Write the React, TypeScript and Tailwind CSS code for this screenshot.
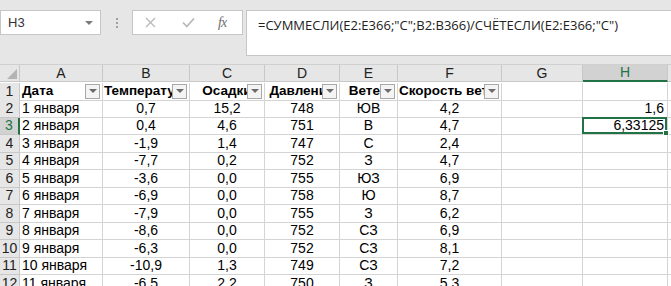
import React from 'react';

const cols = ['A', 'B', 'C', 'D', 'E', 'F', 'G', 'H'];

const header: { text: string; align: string }[] = [
  { text: 'Дата', align: 'justify-start pl-[2px]' },
  { text: 'Температура', align: 'justify-start pl-[1px]' },
  { text: 'Осадки', align: 'justify-center' },
  { text: 'Давление', align: 'justify-center' },
  { text: 'Ветер', align: 'justify-center' },
  { text: 'Скорость ветра', align: 'justify-start pl-[1px]' },
];

const rows: string[][] = [
  ['1 января', '0,7', '15,2', '748', 'ЮВ', '4,2', '', '1,6'],
  ['2 января', '0,4', '4,6', '751', 'В', '4,7', '', '6,33125'],
  ['3 января', '-1,9', '1,4', '747', 'С', '2,4', '', ''],
  ['4 января', '-7,7', '0,2', '752', 'З', '4,7', '', ''],
  ['5 января', '-3,6', '0,0', '755', 'ЮЗ', '6,9', '', ''],
  ['6 января', '-6,9', '0,0', '758', 'Ю', '8,7', '', ''],
  ['7 января', '-7,9', '0,0', '755', 'З', '6,2', '', ''],
  ['8 января', '-8,6', '0,0', '752', 'СЗ', '6,9', '', ''],
  ['9 января', '-6,3', '0,0', '752', 'СЗ', '8,1', '', ''],
  ['10 января', '-10,9', '1,3', '749', 'СЗ', '7,2', '', ''],
  ['11 января', '-6,5', '2,2', '750', 'З', '5,3', '', ''],
];

const gridCols = 'grid-cols-[20px_83px_87px_75px_75px_58px_104px_81px_85px_1fr]';

// Filter dropdown button sitting over the header cell's right edge
const FilterButton = () => (
  <div className="absolute right-0 inset-y-0 w-[17px] bg-white flex items-center">
    <div className="w-[15px] h-[15px] border border-[#a8a8a8] bg-[#f4f4f4] flex items-center justify-center">
      <div className="w-0 h-0 border-l-[4px] border-r-[4px] border-t-[4px] border-l-transparent border-r-transparent border-t-[#6b6b6b]" />
    </div>
  </div>
);

const App: React.FC = () => {
  return (
    <div className="w-[671px] h-[286px] overflow-hidden bg-white font-['Liberation_Sans',Arial,sans-serif] text-black select-none">
      {/* Formula bar area */}
      <div className="h-[64px] bg-[#e6e6e6] flex items-start pt-[10px]">
        <div className="w-[101px] h-[25px] bg-white border border-[#c6c6c6] flex items-center pl-[7px] pr-[7px] text-[13px] text-[#333]">
          <span className="flex-1">H3</span>
          <div className="w-0 h-0 border-l-[4px] border-r-[4px] border-t-[4px] border-l-transparent border-r-transparent border-t-[#7a7a7a]" />
        </div>
        <div className="w-[31px] h-[25px] flex flex-col items-center justify-center gap-[2px]">
          <div className="w-[2px] h-[2px] bg-[#a0a0a0]" />
          <div className="w-[2px] h-[2px] bg-[#a0a0a0]" />
          <div className="w-[2px] h-[2px] bg-[#a0a0a0]" />
        </div>
        <div className="w-[111px] h-[25px] bg-white border border-[#c6c6c6] flex items-center">
          <svg className="ml-[12px]" width="11" height="11" viewBox="0 0 11 11">
            <path d="M1 1 L10 10 M10 1 L1 10" stroke="#b8b8b8" strokeWidth="1.3" fill="none" />
          </svg>
          <svg className="ml-[26px]" width="13" height="11" viewBox="0 0 13 11">
            <path d="M1 5.5 L4.8 9.5 L12 1.5" stroke="#b8b8b8" strokeWidth="1.8" fill="none" />
          </svg>
          <span className="ml-[23px] font-['Liberation_Serif',serif] italic text-[14px] text-[#6e6e6e] tracking-[-1px]">fx</span>
        </div>
        <div className="ml-[3px] flex-1 h-[46px] bg-white border border-[#c6c6c6] border-r-0 pl-[11px] pt-[5px] text-[13px] text-[#222] font-['Open_Sans','Liberation_Sans',sans-serif]">
          =СУММЕСЛИ(E2:E366;"С";B2:B366)/СЧЁТЕСЛИ(E2:E366;"С")
        </div>
      </div>

      {/* Sheet */}
      <div className={`grid ${gridCols} auto-rows-[17.5px] border-t border-[#d0d0d0]`}>
        {/* column header row */}
        <div className="h-[17px] bg-[#e6e6e6] border-r border-b border-[#c8c8c8] relative">
          <svg className="absolute right-[2px] bottom-[2px]" width="10" height="10" viewBox="0 0 10 10">
            <path d="M10 0 L10 10 L0 10 Z" fill="#b4b4b4" />
          </svg>
        </div>
        {cols.map((c) => (
          <div
            key={c}
            className={`h-[17px] flex items-center justify-center text-[14px] border-r ${
              c === 'H'
                ? 'bg-[#d2d2d2] text-[#217346] border-b-2 border-b-[#217346] border-r-[#c8c8c8]'
                : 'bg-[#e6e6e6] text-[#222] border-b border-[#c8c8c8]'
            }`}
          >
            {c}
          </div>
        ))}
        <div className="h-[17px] bg-[#e6e6e6] border-b border-[#c8c8c8]" />

        {/* row 1: headers with filter buttons */}
        <div className="h-[18px] bg-[#e6e6e6] border-r border-b border-[#c8c8c8] flex items-center justify-center text-[14px] text-[#222]">1</div>
        {header.map((h) => (
          <div key={h.text} className={`h-[18px] relative border-r border-b border-[#d4d4d4] flex items-center overflow-hidden whitespace-nowrap font-bold text-[13.5px] ${h.align}`}>
            {h.text}
            <FilterButton />
          </div>
        ))}
        <div className="h-[18px] border-r border-b border-[#d4d4d4]" />
        <div className="h-[18px] border-r border-b border-[#d4d4d4]" />
        <div className="h-[18px] border-b border-[#d4d4d4]" />

        {rows.map((r, ri) => {
          const rowNum = ri + 2;
          const active = rowNum === 3;
          return (
            <React.Fragment key={rowNum}>
              <div
                className={`border-b flex items-center justify-center text-[14px] ${
                  active
                    ? 'bg-[#d2d2d2] text-[#217346] border-r-2 border-r-[#217346] border-b-[#c8c8c8]'
                    : 'bg-[#e6e6e6] text-[#222] border-r border-[#c8c8c8]'
                }`}
              >
                {rowNum}
              </div>
              {r.map((v, ci) => (
                <div
                  key={ci}
                  className={`border-r border-b border-[#d4d4d4] flex items-center text-[14px] whitespace-nowrap ${
                    ci === 0 ? 'pl-[2px]' : ci === 7 ? 'justify-end pr-[3px] relative' : 'justify-center'
                  }`}
                >
                  {v}
                  {ci === 7 && active && (
                    <div className="absolute -left-[1px] -top-[1px] right-0 bottom-0 border-2 border-[#217346]">
                      <div className="absolute -right-[4px] -bottom-[4px] w-[6px] h-[6px] bg-[#217346] border border-white" />
                    </div>
                  )}
                </div>
              ))}
              <div className="border-b border-[#d4d4d4]" />
            </React.Fragment>
          );
        })}
      </div>
    </div>
  );
};

export default App;
